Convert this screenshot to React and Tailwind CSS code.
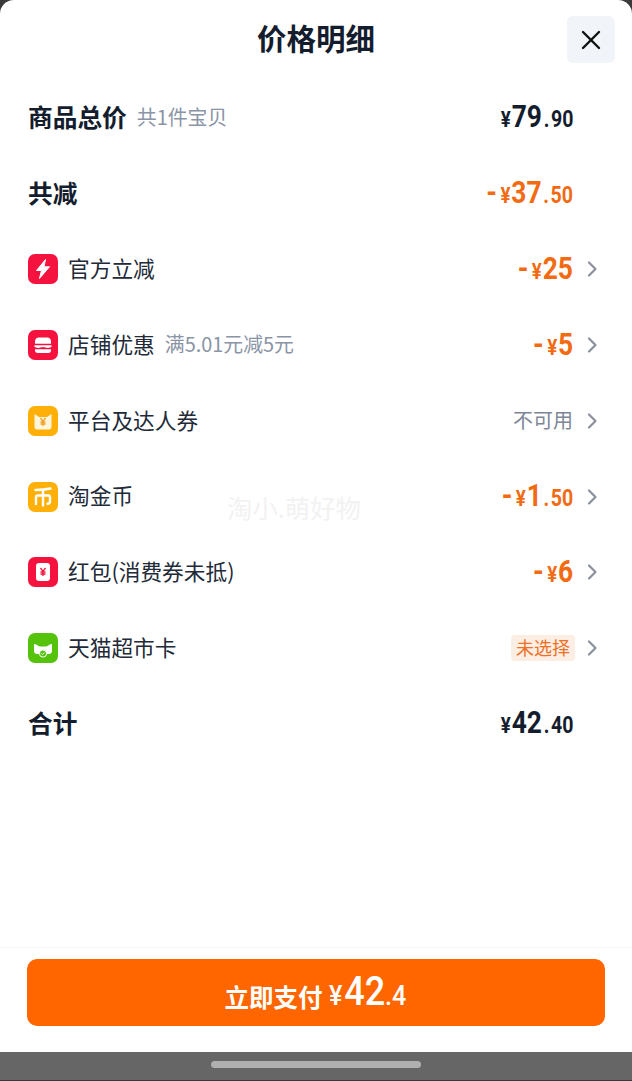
import React from 'react';
import { X } from 'lucide-react';

const FONT = '"Noto Sans CJK SC", "Noto Sans", sans-serif';
const NUM = 'Roboto, "Noto Sans", sans-serif';

const IconBox = ({ className, children }) => (
    <div className={`w-[30px] h-[30px] rounded-[7px] shrink-0 ${className}`}>
        <svg viewBox="0 0 30 30" width="30" height="30">{children}</svg>
    </div>
);

const BoltIcon = () => (
    <IconBox className="bg-[#f5123f]">
        <path d="M17.5 5.5 L8.5 16.5 H13.5 L11.5 24.5 L21.5 12.8 H16 Z" fill="#fff" strokeLinejoin="round" stroke="#fff" strokeWidth="1" />
    </IconBox>
);

const BurgerIcon = () => (
    <IconBox className="bg-[#f5123f]">
        <path d="M7 13.8 V11.5 C7 9 8.5 7.5 11 7.5 H19 C21.5 7.5 23 9 23 11.5 V13.8 Z" fill="#fff" />
        <path d="M6.5 15.2 H23.5 V17 L20 18 L15 17 L10 18 L6.5 17 Z" fill="#fff" />
        <path d="M7 19.2 H23 V20.5 C23 22 22 23 20.5 23 H9.5 C8 23 7 22 7 20.5 Z" fill="#fff" />
    </IconBox>
);

const YenMark = ({ color, y = 15 }) => (
    <g stroke={color} strokeWidth="1.3" fill="none">
        <path d={`M12.5 ${y - 4} L15 ${y - 0.5} L17.5 ${y - 4}`} />
        <path d={`M15 ${y - 0.5} V${y + 4} M12.5 ${y} H17.5 M12.5 ${y + 2} H17.5`} />
    </g>
);

const TicketIcon = () => (
    <IconBox className="bg-[#ffb008]">
        <path d="M6.5 8 L11 11 H19 L23.5 8 V21 C23.5 22.5 22.5 23.5 21 23.5 H9 C7.5 23.5 6.5 22.5 6.5 21 Z" fill="#fff6dc" />
        <YenMark color="#f0a020" y={16} />
    </IconBox>
);

const CoinIcon = () => (
    <IconBox className="bg-[#ffb008]">
        <g stroke="#fff" strokeWidth="2.4" fill="none" strokeLinecap="round">
            <path d="M7.5 8 C12 8 18 7.5 22.5 6.5" />
            <path d="M15 8 V23.5" />
            <path d="M8 22 V15.5 C8 14 9 13.5 10 13.5 H20 C21 13.5 22 14 22 15.5 V19.5 C22 21 21 21.7 19.5 21.7" />
        </g>
    </IconBox>
);

const RedPacketIcon = () => (
    <IconBox className="bg-[#f5123f]">
        <rect x="8" y="6" width="14" height="18" rx="3" fill="#fff" />
        <YenMark color="#f5123f" />
    </IconBox>
);

const TmallIcon = () => (
    <IconBox className="bg-[#55c20c]">
        <path d="M6 11 C8 11 10 13 12 13.5 H18 C20 13 22 11 24 11 V18 C24 20 22.5 21 21 21 H9 C7.5 21 6 20 6 18 Z" fill="#fff" />
        <circle cx="15" cy="20.5" r="3.6" fill="#55c20c" stroke="#fff" strokeWidth="1" />
        <path d="M13.5 20.3 L14.7 21.5 L16.6 19.5" stroke="#fff" strokeWidth="1" fill="none" />
    </IconBox>
);

const Chevron = () => (
    <svg width="12" height="20" viewBox="0 0 12 20" fill="none">
        <path d="M2 3.5 L8.5 10 L2 16.5" stroke="#8b919c" strokeWidth="2.2" strokeLinecap="round" strokeLinejoin="round" />
    </svg>
);

const Price = ({ minus, int, dec, orange }) => (
    <div
        className={`flex items-baseline font-bold leading-none scale-x-[0.85] origin-right mb-[3px] ${orange ? 'text-[#f26a12]' : 'text-[#141d2e]'}`}
        style={{ fontFamily: NUM }}
    >
        {minus && <span className="text-[32px] mr-[4px]">-</span>}
        <span className="text-[22px] mr-[1px]">¥</span>
        <span className="text-[31px]">{int}</span>
        {dec && (
            <span className="text-[23px] ml-[2px]">
                <span className="mr-[2px]">.</span>{dec}
            </span>
        )}
    </div>
);

const Row = ({ left, right, chevron }) => (
    <div className="h-[75.75px] flex items-center pl-7">
        <div className="flex-1 flex items-center min-w-0">{left}</div>
        {right}
        <div className="w-[59px] shrink-0 flex items-center pl-[14px]">
            {chevron && <Chevron />}
        </div>
    </div>
);

const Heading = ({ children }) => (
    <span className="text-[24.7px] leading-none font-semibold text-[#141d2e] mb-[3px]">{children}</span>
);

const Sub = ({ children }) => (
    <span className="text-[19.9px] leading-none text-[#8a94a6] ml-[10px] mb-[2px]">{children}</span>
);

const Item = ({ icon, label, sub }) => (
    <>
        {icon}
        <span className="text-[21.7px] leading-none text-[#222a38] ml-[10px] mb-[3px]">{label}</span>
        {sub && <Sub>{sub}</Sub>}
    </>
);

export default function App() {
    return (
        <div className="relative w-[632px] h-[1081px] bg-[#3a3a3a] overflow-hidden" style={{ fontFamily: FONT }}>
            <div className="h-[1052px] bg-white rounded-t-[14px] flex flex-col">
                <div className="h-[80px] flex items-start justify-center relative">
                    <h1 className="text-[29.5px] leading-none font-bold text-[#141d2e] mt-[23px]">价格明细</h1>
                    <button className="absolute right-[17px] top-[16px] w-[48px] h-[47px] rounded-[6px] bg-[#f1f4f8] flex items-center justify-center">
                        <X size={32} strokeWidth={1.8} className="text-[#111]" />
                    </button>
                </div>

                <Row
                    left={<><Heading>商品总价</Heading><Sub>共1件宝贝</Sub></>}
                    right={<Price int="79" dec="90" />}
                />
                <Row left={<Heading>共减</Heading>} right={<Price minus int="37" dec="50" orange />} />
                <Row left={<Item icon={<BoltIcon />} label="官方立减" />} right={<Price minus int="25" orange />} chevron />
                <Row
                    left={<Item icon={<BurgerIcon />} label="店铺优惠" sub="满5.01元减5元" />}
                    right={<Price minus int="5" orange />}
                    chevron
                />
                <Row
                    left={<Item icon={<TicketIcon />} label="平台及达人券" />}
                    right={<span className="text-[20px] leading-none text-[#7d8797] mb-[2px]">不可用</span>}
                    chevron
                />
                <Row left={<Item icon={<CoinIcon />} label="淘金币" />} right={<Price minus int="1" dec="50" orange />} chevron />
                <Row left={<Item icon={<RedPacketIcon />} label="红包(消费券未抵)" />} right={<Price minus int="6" orange />} chevron />
                <Row
                    left={<Item icon={<TmallIcon />} label="天猫超市卡" />}
                    right={
                        <span className="text-[18px] leading-[25px] h-[26px] px-[5px] rounded-[4px] bg-[#fdeee4] text-[#ec7127] -mr-[2px]">
                            未选择
                        </span>
                    }
                    chevron
                />
                <Row left={<Heading>合计</Heading>} right={<Price int="42" dec="40" />} />

                <div className="flex-1" />

                <div className="h-[105px] border-t border-[#f5f5f5] pt-[11px] px-[27px]">
                    <button className="w-full h-[67px] rounded-[10px] bg-[#ff6600] flex items-baseline justify-center text-white font-bold pt-[15px]">
                        <span className="text-[24.5px] leading-none">立即支付</span>
                        <span className="flex items-baseline leading-none ml-[7px] -mr-[8px] -translate-y-[2px] scale-x-90 origin-left" style={{ fontFamily: NUM }}>
                            <span className="text-[28px] font-medium mr-[2px]">¥</span>
                            <span className="text-[40px] font-medium">42</span>
                            <span className="text-[28px] font-medium">.4</span>
                        </span>
                    </button>
                </div>
            </div>

            <div className="h-[29px] bg-[#666666] border-b border-[#3a3a3a] flex items-start justify-center pt-[9px]">
                <div className="w-[210px] h-[7px] rounded-full bg-[#b0b0b0]" />
            </div>

            {/* watermark */}
            <div className="absolute left-[227px] top-[495px] text-[25.4px] leading-none text-[#f2f2f2]">淘小.萌好物</div>
        </div>
    );
}
